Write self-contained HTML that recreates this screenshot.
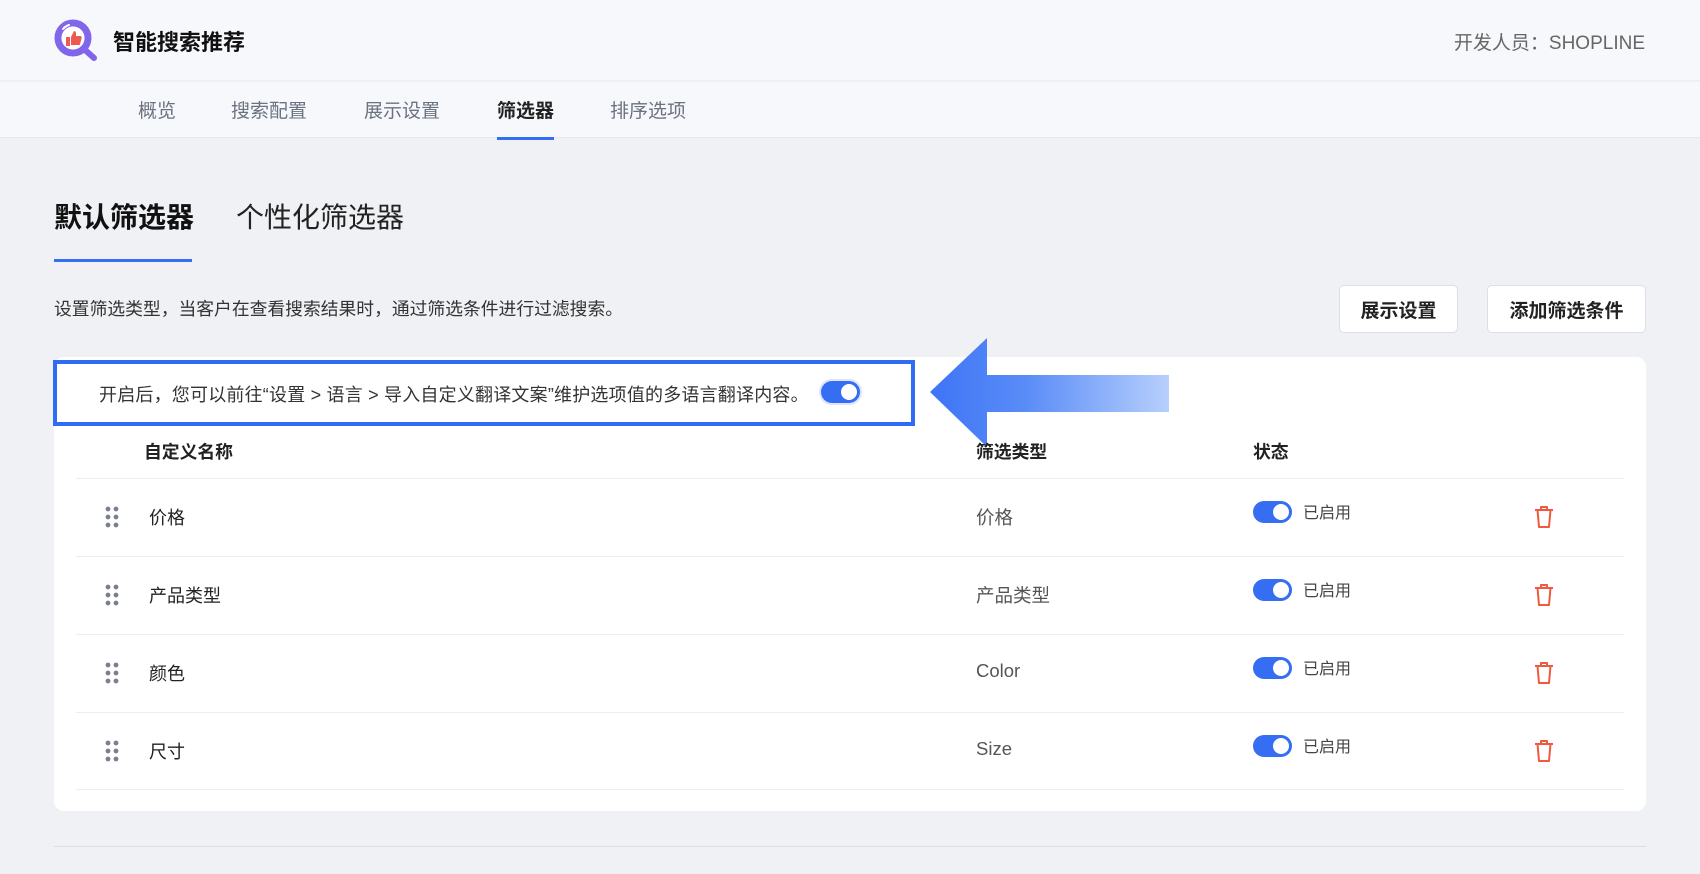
<!DOCTYPE html>
<html><head><meta charset="utf-8"><style>
*{margin:0;padding:0;box-sizing:border-box}
body{width:1700px;height:874px;overflow:hidden;background:#f0f1f5;font-family:"Liberation Sans","Noto Sans CJK SC",sans-serif;color:#222;position:relative}
.a{position:absolute;white-space:nowrap}
.tg{position:absolute;width:39px;height:22px;border-radius:11px;background:#356df3}
.tg::after{content:"";position:absolute;right:3px;top:3px;width:16px;height:16px;border-radius:50%;background:#fff}
.btn{position:absolute;height:48px;background:#fff;border:1px solid #dcdfe6;border-radius:5px;font-size:19px;font-weight:bold;color:#222;display:flex;align-items:center;justify-content:center}
.line{position:absolute;left:76px;width:1548px;height:1px;background:#eceef2}
</style></head><body>
<div class="a" style="left:0;top:0;width:1700px;height:81px;background:#f7f8fb;border-bottom:1px solid #eceef2"></div>
<div class="a" style="left:0;top:82px;width:1700px;height:56px;background:#f7f8fb;border-bottom:1px solid #e6e8ee"></div>
<svg class="a" style="left:54px;top:19px" width="46" height="44" viewBox="0 0 46 44"><circle cx="19" cy="19" r="15" fill="none" stroke="#8166ec" stroke-width="7"/><circle cx="19" cy="19" r="11.5" fill="#fff"/><line x1="30" y1="30" x2="40" y2="39" stroke="#8166ec" stroke-width="6" stroke-linecap="round"/><path d="M12 18h4v9h-4zM17 18l3-6c2 0 2 2 2 3v2h4c1 0 2 1 1.6 2.2l-1.6 6c-.3.8-1 .8-1.6.8H17z" fill="#ee5a52"/><path d="M9 10a13 13 0 0 1 6-4" stroke="#fff" stroke-width="2" fill="none" stroke-linecap="round"/></svg>
<div class="a" style="left:113px;top:25px;font-size:22px;font-weight:bold;color:#111">智能搜索推荐</div>
<div class="a" style="right:55px;top:28px;font-size:19px;color:#666">开发人员：SHOPLINE</div>
<div class="a" style="left:138px;top:96px;font-size:19px;color:#6b7280">概览</div>
<div class="a" style="left:231px;top:96px;font-size:19px;color:#6b7280">搜索配置</div>
<div class="a" style="left:364px;top:96px;font-size:19px;color:#6b7280">展示设置</div>
<div class="a" style="left:497px;top:96px;font-size:19px;color:#222;font-weight:bold">筛选器</div>
<div class="a" style="left:497px;top:137px;width:57px;height:3px;background:#356df3"></div>
<div class="a" style="left:610px;top:96px;font-size:19px;color:#6b7280">排序选项</div>
<div class="a" style="left:54px;top:196px;font-size:28px;font-weight:bold;color:#111">默认筛选器</div>
<div class="a" style="left:236px;top:196px;font-size:28px;color:#222">个性化筛选器</div>
<div class="a" style="left:54px;top:259px;width:138px;height:3px;background:#356df3"></div>
<div class="a" style="left:54px;top:295px;font-size:17.8px;color:#333">设置筛选类型，当客户在查看搜索结果时，通过筛选条件进行过滤搜索。</div>
<div class="btn" style="left:1339px;top:285px;width:119px">展示设置</div>
<div class="btn" style="left:1487px;top:285px;width:159px">添加筛选条件</div>
<div class="a" style="left:54px;top:357px;width:1592px;height:454px;background:#fff;border-radius:10px"></div>
<div class="a" style="left:53px;top:360px;width:862px;height:66px;border:4px solid #2f6bf5;background:#fff"></div>
<div class="a" style="left:99px;top:381px;font-size:18px;letter-spacing:0.2px;color:#333">开启后，您可以前往“设置 &gt; 语言 &gt; 导入自定义翻译文案”维护选项值的多语言翻译内容。</div>
<div class="tg" style="left:821px;top:381px;box-shadow:0 0 0 2px #dbe5fd"></div>
<svg class="a" style="left:928px;top:336px" width="245" height="114"><defs><linearGradient id="g" x1="0" x2="1"><stop offset="0" stop-color="#3d74f6"/><stop offset="0.4" stop-color="#5a8cf7"/><stop offset="1" stop-color="#b7cffc"/></linearGradient></defs><path d="M2 56L59 2V39H241V76H59V111Z" fill="url(#g)"/></svg>
<div class="a" style="left:144px;top:438px;font-size:17.8px;font-weight:bold;color:#222">自定义名称</div>
<div class="a" style="left:976px;top:438px;font-size:17.8px;font-weight:bold;color:#222">筛选类型</div>
<div class="a" style="left:1253px;top:438px;font-size:17.8px;font-weight:bold;color:#222">状态</div>
<div class="line" style="top:478px"></div>
<div class="line" style="top:556px"></div>
<div class="line" style="top:634px"></div>
<div class="line" style="top:712px"></div>
<div class="line" style="top:789px"></div>
<div class="a" style="left:54px;top:846px;width:1592px;height:1px;background:#dcdfe4"></div>
<div id="rows"></div>
<script>
var d=[["价格","价格"],["产品类型","产品类型"],["颜色","Color"],["尺寸","Size"]],h="";
d.forEach(function(r,i){var c=517+i*78;
h+='<svg class="a" style="left:104px;top:'+(c-12)+'px" width="16" height="24"><g fill="#7a8090"><circle cx="4" cy="4" r="2.4"/><circle cx="12" cy="4" r="2.4"/><circle cx="4" cy="12" r="2.4"/><circle cx="12" cy="12" r="2.4"/><circle cx="4" cy="20" r="2.4"/><circle cx="12" cy="20" r="2.4"/></g></svg>';
h+='<div class="a" style="left:149px;top:'+(c-13)+'px;font-size:18px;color:#222">'+r[0]+'</div>';
h+='<div class="a" style="left:976px;top:'+(c-13)+'px;font-size:18.5px;color:#555">'+r[1]+'</div>';
h+='<div class="tg" style="left:1253px;top:'+(c-16)+'px"></div>';
h+='<div class="a" style="left:1303px;top:'+(c-18)+'px;font-size:16px;color:#444">已启用</div>';
h+='<svg class="a" style="left:1533px;top:'+(c-12)+'px" width="22" height="24" fill="none" stroke="#ee5a40" stroke-width="2" stroke-linejoin="round"><path d="M2 5H20M8 5V2H14V5M4.5 5L6 22H16L17.5 5"/></svg>';
});
document.getElementById("rows").outerHTML=h;
</script>
</body></html>
